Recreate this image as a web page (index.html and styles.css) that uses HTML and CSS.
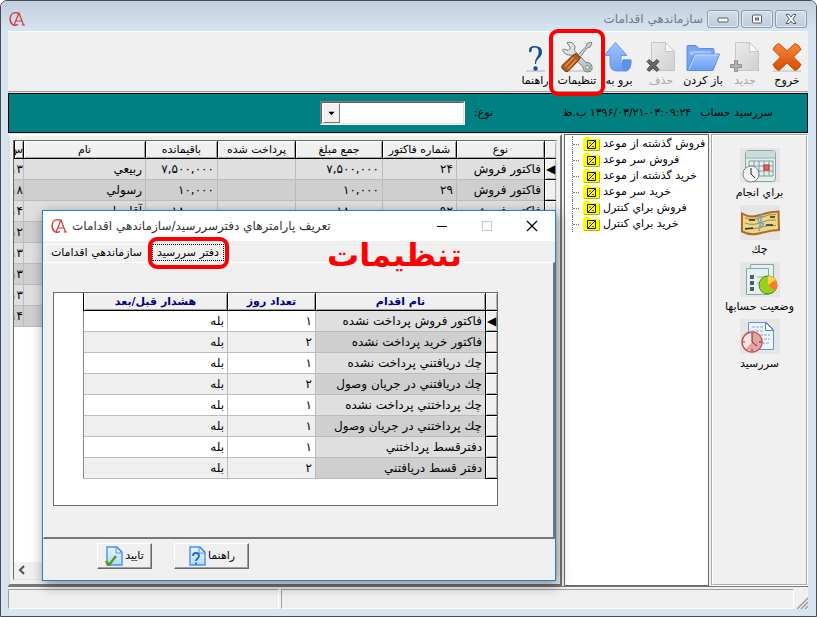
FILE: index.html
```html
<!DOCTYPE html>
<html lang="fa">
<head>
<meta charset="utf-8">
<title>سازماندهي اقدامات</title>
<link rel="stylesheet" href="styles.css">
</head>
<body>
<svg class="defs" aria-hidden="true">
  <defs>
    <linearGradient id="blue" x1="0" y1="0" x2="0" y2="1"><stop offset="0" stop-color="#9cc4ff"/><stop offset="1" stop-color="#6a9cf2"/></linearGradient>
    <linearGradient id="orange" x1="0" y1="0" x2="0" y2="1"><stop offset="0" stop-color="#f58a3c"/><stop offset="1" stop-color="#d94a00"/></linearGradient>
    <linearGradient id="paper" x1="0" y1="0" x2="1" y2="1"><stop offset="0" stop-color="#ececec"/><stop offset="1" stop-color="#cfcfcf"/></linearGradient>
    <linearGradient id="sheet" x1="0" y1="0" x2="0" y2="1"><stop offset="0" stop-color="#e6f3ff"/><stop offset="1" stop-color="#b8dbf8"/></linearGradient>
    <linearGradient id="steel" x1="0" y1="0" x2="1" y2="1"><stop offset="0" stop-color="#eef2f2"/><stop offset="1" stop-color="#a9b9b9"/></linearGradient>
    <symbol id="logo" viewBox="0 0 16 14">
      <path d="M9.500 1.500C6-.5 1 1 1 7s5 7.500 8 5.200M2 3.500C.8 6 1.200 9.500 3.200 11.800" fill="none" stroke="#cc3a3a" stroke-width="1.200"/>
      <path d="M5 13 10 1l4.500 12M6.600 9h6M12.700 13h3.300M4 13h2.500" fill="none" stroke="#cc3a3a" stroke-width="1.200"/>
    </symbol>
    <symbol id="folder" viewBox="0 0 17 14">
      <path d="M0 2 2 0h5l1 2h9v12H0z" fill="#ff0"/><path d="M16.500 3v10.500H1" fill="none" stroke="#b4b400"/>
      <path d="M4.500 3.500h8v8h-8z" fill="none" stroke="#111"/><path d="m5 11 7-7" stroke="#111"/><path d="M6 6h2M9 9.500h2" stroke="#555"/>
    </symbol>
    <symbol id="page" viewBox="0 0 18 20">
      <path d="M2 1h10l5 5v13H2z" fill="url(#sheet)" stroke="#4b8ff5" stroke-width="1.400"/><path d="M11 1v6h6z" fill="#f4faff" stroke="#4b8ff5"/>
    </symbol>
  </defs>
</svg>

<div class="window">
  <header class="titlebar">
    <svg class="logo" role="img" aria-label="CA"><use href="#logo"/></svg>
    <h1 class="window-title">سازماندهي اقدامات</h1>
    <div class="window-buttons">
      <button aria-label="كوچك كردن"><svg viewBox="0 0 12 10"><rect x="1" y="4" width="10" height="4" rx="1" fill="#fff" stroke="#555c68"/></svg></button>
      <button aria-label="بزرگ كردن"><svg viewBox="0 0 12 10"><rect x="1.500" y="1" width="9" height="8" rx="1" fill="#fff" stroke="#555c68"/><rect x="4.500" y="4" width="3" height="2" fill="#ccd" stroke="#555c68"/></svg></button>
      <button aria-label="بستن"><svg viewBox="0 0 12 10"><path d="M1 .5h3l2 2.500 2-2.500h3L7.800 5 11 9.500H8L6 7 4 9.500H1L4.200 5z" fill="#fff" stroke="#555c68"/></svg></button>
    </div>
  </header>

  <nav class="toolbar" dir="rtl">
    <button class="tool"><svg viewBox="0 0 32 32"><path d="M2 30h28" stroke="#d4d4d4" stroke-width="2"/><path d="m8 2.500 8 7.500 8-7.500q4 1 6 6L22.500 16l7.500 7.500q-2 5-6 6L16 22l-8 7.500q-4-1-6-6L9.500 16 2 8.500q2-5 6-6z" fill="url(#orange)" stroke="#c44a08"/></svg><span>خروج</span></button>
    <button class="tool" disabled><svg viewBox="0 0 32 32"><path d="M6.500 1.500h14l9 9v19h-23z" fill="url(#paper)" stroke="#c6c6c6"/><path d="M20.500 1.500v9h9z" fill="#f8f8f8" stroke="#c6c6c6"/><path d="M5.500 19.500h3v4h4v3h-4v4h-3v-4h-4v-3h4z" fill="#b4b4b4" stroke="#909090"/></svg><span>جديد</span></button>
    <button class="tool"><svg class="wide" viewBox="0 0 36 32"><path d="M2 29V5.500q0-1 1-1h8l3 3h14q1 0 1 1V14" fill="#78a8f4" stroke="#5a8ce4"/><path d="M5 10h21v4H5z" fill="#a6c6fa"/><path d="M2 29.500 9.500 13h25L28 29.500z" fill="url(#blue)" stroke="#5a8ce4"/><path d="m4 28.500 6.300-14.500h23" fill="none" stroke="#c6dcff"/></svg><span>باز کردن</span></button>
    <button class="tool" disabled><svg viewBox="0 0 32 32"><path d="M6.500 1.500h14l9 9v19h-23z" fill="url(#paper)" stroke="#c6c6c6"/><path d="M20.500 1.500v9h9z" fill="#f8f8f8" stroke="#c6c6c6"/><path d="m4 18.500 4 3.500 4-3.500 2 2-3.500 4 3.500 4-2 2L8 27l-4 3.500-2-2 3.500-4-3.500-4z" fill="#666" stroke="#505050"/></svg><span>حذف</span></button>
    <button class="tool"><svg viewBox="0 0 32 32"><path d="M12.500 1.500 1 14.500h6V23q0 7 7 7h9q5-1 5-11h-8q0 5-2 4v-8.500h6z" fill="url(#blue)" stroke="#6a98e8"/><path d="M23 30q-5-1-3-11h8q0 10-5 11z" fill="#5f92ee" stroke="#5a8ce4"/></svg><span>برو به</span></button>
    <button class="tool marked"><svg viewBox="0 0 32 32"><path d="M5 30h25" stroke="#d4d4d4" stroke-width="2"/><path d="M6 1.500q6-1 8 4l-.5 4L25 21.500q5-.5 6 4t-4 5.500q-5 0-5-5L10.500 14Q4 15 1.500 9l1-1L7 9.500 9.500 7z" fill="url(#steel)" stroke="#728080"/><circle cx="26.500" cy="26.500" r="2" fill="#f4f4f4" stroke="#728080"/><path d="m17 14 8-8.500 1-3 4-1.500 1 1-2 4-3 1-7 9z" fill="url(#steel)" stroke="#728080"/><path d="m15 12.500 4.500 4-2 3L7 30.500q-2 1-4.500-1.500T1 24.500L12 14z" fill="#b4581a" stroke="#7a3a0a"/><path d="m4 25.500 8.500-9M6.500 28l9-9.500" stroke="#e6985a" stroke-width="1.200"/></svg><span>تنظيمات</span></button>
    <button class="tool"><svg viewBox="0 0 32 32"><path d="M7 30h19" stroke="#c8d0d8" stroke-width="2"/><path d="M10 10Q9.500 5 16 5q7 0 7 6 0 3.500-3.500 6.500Q17 19.500 17 23h-1.200q-.3-4 2.200-7 1.700-2.500 1.700-5 0-4.500-4-4.500-3 0-3 2 .3 2.500-1.400 2.700Q10.200 11.500 10 10z" fill="#154f8c"/><circle cx="16.500" cy="27.500" r="2.200" fill="#154f8c"/></svg><span>راهنما</span></button>
  </nav>

  <section class="banner" dir="rtl">
    <span class="banner-name">سررسيد حساب</span>
    <time class="banner-time">۱۳۹۶/۰۳/۲۱-۰۳:۰۹:۲۴ ب.ظ</time>
    <label class="banner-label" for="kind">نوع:</label>
    <span class="combo"><select id="kind"><option></option></select><svg viewBox="0 0 17 19" aria-hidden="true"><path d="M5 8h7l-3.500 4z" fill="#000"/></svg></span>
  </section>

  <main class="workspace">
    <section class="ledger">
      <div class="ledger-view">
        <table class="grid" dir="rtl">
          <colgroup><col class="c-mark"><col class="c-kind"><col class="c-num"><col class="c-sum"><col class="c-paid"><col class="c-left"><col><col class="c-year"></colgroup>
          <thead><tr><th class="mark"></th><th>نوع</th><th>شماره فاكتور</th><th>جمع مبلغ</th><th>پرداخت شده</th><th>باقيمانده</th><th>نام</th><th>س</th></tr></thead>
          <tbody>
            <tr><td class="mark">◀</td><td>فاكتور فروش</td><td>۲۴</td><td>۷,۵۰۰,۰۰۰</td><td></td><td>۷,۵۰۰,۰۰۰</td><td>ربيعي</td><td class="year">۱۳</td></tr>
            <tr><td class="mark"></td><td>فاكتور فروش</td><td>۲۹</td><td>۱۰,۰۰۰</td><td></td><td>۱۰,۰۰۰</td><td>رسولي</td><td class="year">۱۸</td></tr>
            <tr><td class="mark"></td><td>فاكتور فروش</td><td>۹۲</td><td>۱۸۰,۰۰۰</td><td></td><td>۱۸۰,۰۰۰</td><td>آقاي اسدي</td><td class="year">۱۴</td></tr>
            <tr><td class="mark"></td><td></td><td></td><td></td><td></td><td></td><td></td><td class="year">۱۲</td></tr>
            <tr><td class="mark"></td><td></td><td></td><td></td><td></td><td></td><td></td><td class="year">۱۳</td></tr>
            <tr><td class="mark"></td><td></td><td></td><td></td><td></td><td></td><td></td><td class="year">۱۳</td></tr>
            <tr><td class="mark"></td><td></td><td></td><td></td><td></td><td></td><td></td><td class="year">۱۳</td></tr>
            <tr><td class="mark"></td><td></td><td></td><td></td><td></td><td></td><td></td><td class="year">۱۴</td></tr>
          </tbody>
        </table>
        <div class="scrollbar"><button aria-label="پيمايش"><svg viewBox="0 0 16 16"><path d="M10 4 6 8l4 4" fill="none" stroke="#505050" stroke-width="2"/></svg></button></div>
      </div>
    </section>

    <ul class="tree">
      <li><svg><use href="#folder"/></svg><span>فروش گذشته از موعد</span></li>
      <li><svg><use href="#folder"/></svg><span>فروش سر موعد</span></li>
      <li><svg><use href="#folder"/></svg><span>خريد گذشته از موعد</span></li>
      <li><svg><use href="#folder"/></svg><span>خريد سر موعد</span></li>
      <li><svg><use href="#folder"/></svg><span>فروش براي كنترل</span></li>
      <li><svg><use href="#folder"/></svg><span>خريد براي كنترل</span></li>
    </ul>

    <nav class="shortcuts">
      <button><svg viewBox="0 0 40 35"><rect x="5.500" y="2.500" width="30" height="31" rx="3" fill="#e3eeee" stroke="#8ba3a3"/><path d="M6 9V5q0-2 2-2h25q2 0 2 2v4z" fill="#c9dddd"/><path d="M6 10h29" stroke="#8ba3a3"/><path d="M9 13h24v15H9zM9 18h24M9 23h24M14 13v15M19 13v15M24 13v15M29 13v15" fill="none" stroke="#829c9c"/><rect x="24" y="17" width="5" height="5" fill="#f06060" stroke="#c82828"/><circle cx="11" cy="26" r="8" fill="#f5f5f5" stroke="#888"/><path d="M11 20v6l4 4" fill="none" stroke="#222"/></svg><span>براي انجام</span></button>
      <button><svg viewBox="0 0 40 35"><path d="M2 8.500q8 5 18 1.500t18.500-3.500L39 25q-8 0-18 3T2 26.500z" fill="#ecd688" stroke="#b06a24" stroke-width="2"/><path d="M5 13q8 3 16-.5t15-3M5 18q8 3 16-.5t15-2.500M5 23q8 2 15-.5t16-2" fill="none" stroke="#9a8c50"/><path d="M9 15h6M5 24l8-1M30 12h5M26 20h7" stroke="#2d2c24" stroke-width="1.500"/><path d="M24 12q-6-2-6 2t4 4-3 6M22 9l-3 17" fill="none" stroke="#7fa3b8" stroke-width="1.500"/></svg><span>چك</span></button>
      <button><svg viewBox="0 0 40 35"><path d="M10.500 2.500h23v26h-23z" fill="#e7f0f0" stroke="#8aa5a5"/><path d="M6.500 6.500h22v26h-22z" fill="#e7f0f0" stroke="#8aa5a5"/><path d="M10 13h4v4h-4zM10 19h4v4h-4zM10 25h4v4h-4z" fill="#4b6060"/><path d="M17 15h9M17 21h5" stroke="#96aaaa"/><circle cx="28" cy="23" r="9" fill="#98cf21" stroke="#4c8410"/><path d="M28 23V14q8 0 9 9z" fill="#ffd84a"/><path d="m28 23 7-5q4 6 0 11z" fill="#ff7b24"/></svg><span>وضعيت حسابها</span></button>
      <button><svg viewBox="0 0 40 35"><path d="M8.500 3.500h18l7 7v20h-25z" fill="#edf4fd" stroke="#6d93cc"/><path d="M25.500 3.500v8h8z" fill="#fff" stroke="#4f80cc"/><path d="M12 8h11M12 12h11M12 16h18M20 20h10M22 24h8" stroke="#8da9c9" stroke-dasharray="3 1"/><circle cx="12" cy="23" r="10" fill="#fbe5e5" stroke="#c15252" stroke-width="1.500"/><path d="M12 23V14q9 0 9 9t-9 9l-6-2z" fill="#e3a4a4"/><path d="M12 16v7l5 4M12 14v2M3 23h2M19 23h2M12 30v2" fill="none" stroke="#6b2424"/></svg><span>سررسيد</span></button>
    </nav>
  </main>

  <footer class="status"><span class="status-a"></span><span class="status-b"></span><svg viewBox="0 0 12 12"><path d="M1 12 12 1M5 12l7-7M9 12l3-3" stroke="#999" stroke-width="1.500"/></svg></footer>

  <section class="dialog" role="dialog" aria-labelledby="dialog-title">
    <header class="dialog-bar">
      <svg class="logo" role="img" aria-label="CA"><use href="#logo"/></svg>
      <h2 id="dialog-title" dir="rtl">تعريف پارامترهاي دفترسررسيد/سازماندهي اقدامات</h2>
      <div class="dialog-buttons">
        <button aria-label="كوچك كردن"><svg viewBox="0 0 12 12"><path d="M1 6.500h10" stroke="#000"/></svg></button>
        <button aria-label="بزرگ كردن" disabled><svg viewBox="0 0 12 12"><rect x="1.500" y="1.500" width="9" height="9" fill="none" stroke="#c8c8c8"/></svg></button>
        <button aria-label="بستن"><svg viewBox="0 0 12 12"><path d="m1 1 10 10M11 1 1 11" stroke="#000" stroke-width="1.200"/></svg></button>
      </div>
    </header>
    <div class="tabs" role="tablist">
      <button class="tab" role="tab" aria-selected="false">سازماندهي اقدامات</button>
      <button class="tab active" role="tab" aria-selected="true"><span>دفتر سررسيد</span></button>
    </div>
    <div class="tab-panel" role="tabpanel">
      <div class="params">
        <table class="grid" dir="rtl">
          <colgroup><col class="c-mark"><col class="c-action"><col class="c-days"><col></colgroup>
          <thead><tr><th class="mark"></th><th>نام اقدام</th><th>تعداد روز</th><th>هشدار قبل/بعد</th></tr></thead>
          <tbody>
            <tr><td class="mark">◀</td><td>فاكتور فروش پرداخت نشده</td><td>۱</td><td>بله</td></tr>
            <tr><td class="mark"></td><td>فاكتور خريد پرداخت نشده</td><td>۲</td><td>بله</td></tr>
            <tr><td class="mark"></td><td>چك دريافتني پرداخت نشده</td><td>۱</td><td>بله</td></tr>
            <tr><td class="mark"></td><td>چك دريافتني در جريان وصول</td><td>۲</td><td>بله</td></tr>
            <tr><td class="mark"></td><td>چك پرداختني پرداخت نشده</td><td>۱</td><td>بله</td></tr>
            <tr><td class="mark"></td><td>چك پرداختني در جريان وصول</td><td>۱</td><td>بله</td></tr>
            <tr><td class="mark"></td><td>دفترقسط پرداختني</td><td>۱</td><td>بله</td></tr>
            <tr><td class="mark"></td><td>دفتر قسط دريافتني</td><td>۲</td><td>بله</td></tr>
          </tbody>
        </table>
      </div>
    </div>
    <div class="dialog-actions">
      <button class="push"><svg viewBox="0 0 18 20"><use href="#page"/><path d="m1 15 3 4L11 10" fill="none" stroke="#4f9d1c" stroke-width="2.500"/></svg><span>تاييد</span></button>
      <button class="push push-wide"><svg viewBox="0 0 18 20"><use href="#page"/><path d="M5 10q0-3 3-3t3 3q0 1-1.500 2.500T8 15M8 16.500v2" fill="none" stroke="#1c6fb0" stroke-width="1.800"/></svg><span>راهنما</span></button>
    </div>
    <strong class="callout">تنظيمات</strong>
  </section>
</div>
</body>
</html>
```
FILE: styles.css
```css
* { box-sizing: border-box; }
html, body { height: 100%; margin: 0; }
body { background: #fff; color: #000; font: 11px/16px "DejaVu Sans", sans-serif; }
h1, h2, ul { margin: 0; padding: 0; font: inherit; list-style: none; }
button { margin: 0; padding: 0; border: 0; background: none; color: inherit; font: inherit; }
svg { display: block; flex: none; }
.defs { position: absolute; width: 0; height: 0; }
.logo { width: 16px; height: 14px; }

.window { position: relative; display: flex; flex-direction: column; height: 100%; padding: 0 8px 7px 7px; border: 1px solid #4a4a50; border-radius: 7px 7px 0 0; background: #d7e4f2; }

.titlebar { display: flex; align-items: center; height: 30px; margin: 0 -8px 0 -7px; padding: 6px 9px 0 8px; border-radius: 6px 6px 0 0; background: linear-gradient(#c1cedb, #d7e4f2); }
.window-title { margin-left: auto; color: #75797f; font-size: 12px; }
.window-buttons { display: flex; gap: 2px; margin-left: 4px; }
.window-buttons button { display: grid; place-items: center; width: 32px; height: 18px; border: 1px solid #8d99a8; border-radius: 3px; background: linear-gradient(#d4deea, #bccbdb); box-shadow: inset 0 0 0 1px #e4ecf5; }
.window-buttons svg { width: 12px; height: 10px; }

.toolbar { display: flex; height: 61px; padding-top: 9px; border-top: 1px solid #fff; border-bottom: 1px solid #a0a0a0; background: #f0f0f0; }
.tool { position: relative; display: flex; flex-direction: column; align-items: center; width: 42px; white-space: nowrap; }
.tool svg { width: 32px; height: 32px; }
.tool svg.wide { width: 36px; }
.tool:disabled { color: #a5a5a5; }
.marked::after { content: ""; position: absolute; inset: -12px -7px -5px; z-index: 2; border: 4px solid #f00; border-radius: 9px; }

.banner { display: flex; align-items: center; height: 40px; margin-top: 1px; padding-right: 34px; border: 1px solid #000; background: #008080; }
.banner-time { margin-right: 9px; }
.banner-label { margin-right: auto; }
.combo { position: relative; display: flex; width: 145px; height: 24px; margin: 0 9px 0 311px; border: 1px solid; border-color: #808080 #fff #fff #808080; }
.combo select { width: 100%; border: 1px solid; border-color: #606060 #e0e0e0 #e0e0e0 #606060; border-radius: 0; background: #fff; appearance: none; font: inherit; }
.combo svg { position: absolute; left: 2px; top: 1px; width: 17px; height: 20px; border: 1px solid; border-color: #fff #777 #777 #fff; background: #f0f0f0; pointer-events: none; }

.workspace { display: flex; flex: 1; min-height: 0; gap: 2px; margin-top: 1px; background: #f0f0f0; }
.ledger { flex: 1; min-width: 0; padding: 4px 3px; border: 2px solid; border-color: #fff #777 #777 #ddd; }
.ledger-view { display: flex; flex-direction: column; height: 100%; border: 1px solid; border-color: #696969 #e3e3e3 #e3e3e3 #696969; background: #fff; overflow: hidden; }
.scrollbar { height: 17px; margin-top: auto; background: #f0f0f0; }
.scrollbar svg { width: 16px; height: 16px; }

.grid { width: 100%; border-collapse: separate; border-spacing: 0; table-layout: fixed; white-space: nowrap; }
.grid th { height: 18px; padding: 0; border: solid #000; border-width: 0 0 1px 1px; background: #f0f0f0; box-shadow: inset 1px 1px #fff, inset -1px -1px #a0a0a0; font-weight: 400; line-height: 16px; overflow: hidden; }
.grid td { height: 21px; padding: 0 3px; border: solid #bcbcbc; border-width: 0 0 1px 1px; background: #dfdfdf; font-size: 12px; line-height: 20px; text-align: right; overflow: hidden; }
.grid tr:nth-child(even) td { background: #cfcfcf; }
.grid .mark { padding: 0; border-color: #000; background: #f0f0f0; text-align: center; box-shadow: inset 1px 1px #fff, inset -1px -1px #b0b0b0; }
.grid tr:nth-child(even) .mark { background: #f0f0f0; }
.grid .year { padding: 0; border-left: 0; }
.c-mark { width: 12px; }
.c-kind { width: 88px; }
.c-num { width: 74px; }
.c-sum { width: 87px; }
.c-paid { width: 78px; }
.c-left { width: 72px; }
.c-year { width: 9px; }

.tree { width: 145px; padding: 1px 0 0 7px; border: 1px solid #696969; background: #fff; }
.tree li { display: flex; align-items: center; height: 16px; border-left: 1px dotted #777; white-space: nowrap; }
.tree li::before { content: ""; width: 6px; margin-right: 4px; border-top: 1px dotted #777; }
.tree svg { width: 17px; height: 14px; margin-right: 3px; }

.shortcuts { width: 97px; padding-top: 12px; border: 2px groove #fff; }
.shortcuts button { display: flex; flex-direction: column; align-items: center; width: 100%; height: 57px; white-space: nowrap; }
.shortcuts svg { width: 40px; height: 35px; background: #e5e5e5; }
.shortcuts span { margin-top: 2px; }

.status { display: flex; gap: 2px; height: 23px; padding-top: 2px; border-top: 1px solid #777; background: #f0f0f0; }
.status span { border: 1px solid; border-color: #a0a0a0 #fff #fff #a0a0a0; }
.status-a { flex: 0 1 271px; }
.status-b { flex: 1; }
.status svg { align-self: flex-end; width: 12px; height: 12px; }

.dialog { position: absolute; left: 41px; top: 209px; width: 514px; border: 1px solid #1883d7; background: #f0f0f0; box-shadow: 2px 4px 12px rgba(0, 0, 0, .45); }
.dialog-bar { display: flex; align-items: center; height: 30px; padding: 0 17px 0 8px; background: #fff; }
.dialog-bar h2 { margin-left: 5px; color: #333; font-size: 12px; }
.dialog-buttons { display: flex; gap: 33px; margin-left: auto; }
.dialog-buttons svg { width: 12px; height: 12px; }
.tabs { display: flex; align-items: flex-end; gap: 1px; height: 21px; padding-left: 2px; }
.tab { width: 103px; height: 18px; border: 1px solid; border-color: #fff #ddd transparent #fff; white-space: nowrap; }
.tab.active { position: relative; width: 78px; height: 20px; border: 0; }
.tab.active span { display: block; width: 72px; margin: 0 auto; border: 1px dotted #000; line-height: 15px; }
.tab.active::after { content: ""; position: absolute; inset: -5px -2px -7px -1px; border: 4px solid #f00; border-radius: 9px; }
.tab-panel { padding: 29px 55px 31px 9px; border: solid; border-width: 1px 2px 2px 1px; border-color: #fff #777 #777 #fff; }
.params { padding: 0 0 26px 29px; border: 1px solid #696969; background: #fff; }
.params th { color: #000080; font-weight: 700; }
.params td:last-child { border-left-color: #888; }
.params td:nth-child(n+3) { background: #fff; }
.params tr:nth-child(even) td:nth-child(n+3) { background: #efefef; }
.c-action { width: 170px; }
.c-days { width: 88px; }
.dialog-actions { display: flex; gap: 22px; padding: 4px 54px 11px; }
.push { display: flex; align-items: center; justify-content: center; gap: 2px; width: 55px; height: 26px; border: 1px solid; border-color: #fff #696969 #696969 #fff; box-shadow: inset -1px -1px #a0a0a0; }
.push-wide { width: 75px; }
.push svg { width: 18px; height: 20px; }
.callout { position: absolute; left: 284px; top: 20px; color: #f00; font-size: 32px; line-height: 48px; }
```
